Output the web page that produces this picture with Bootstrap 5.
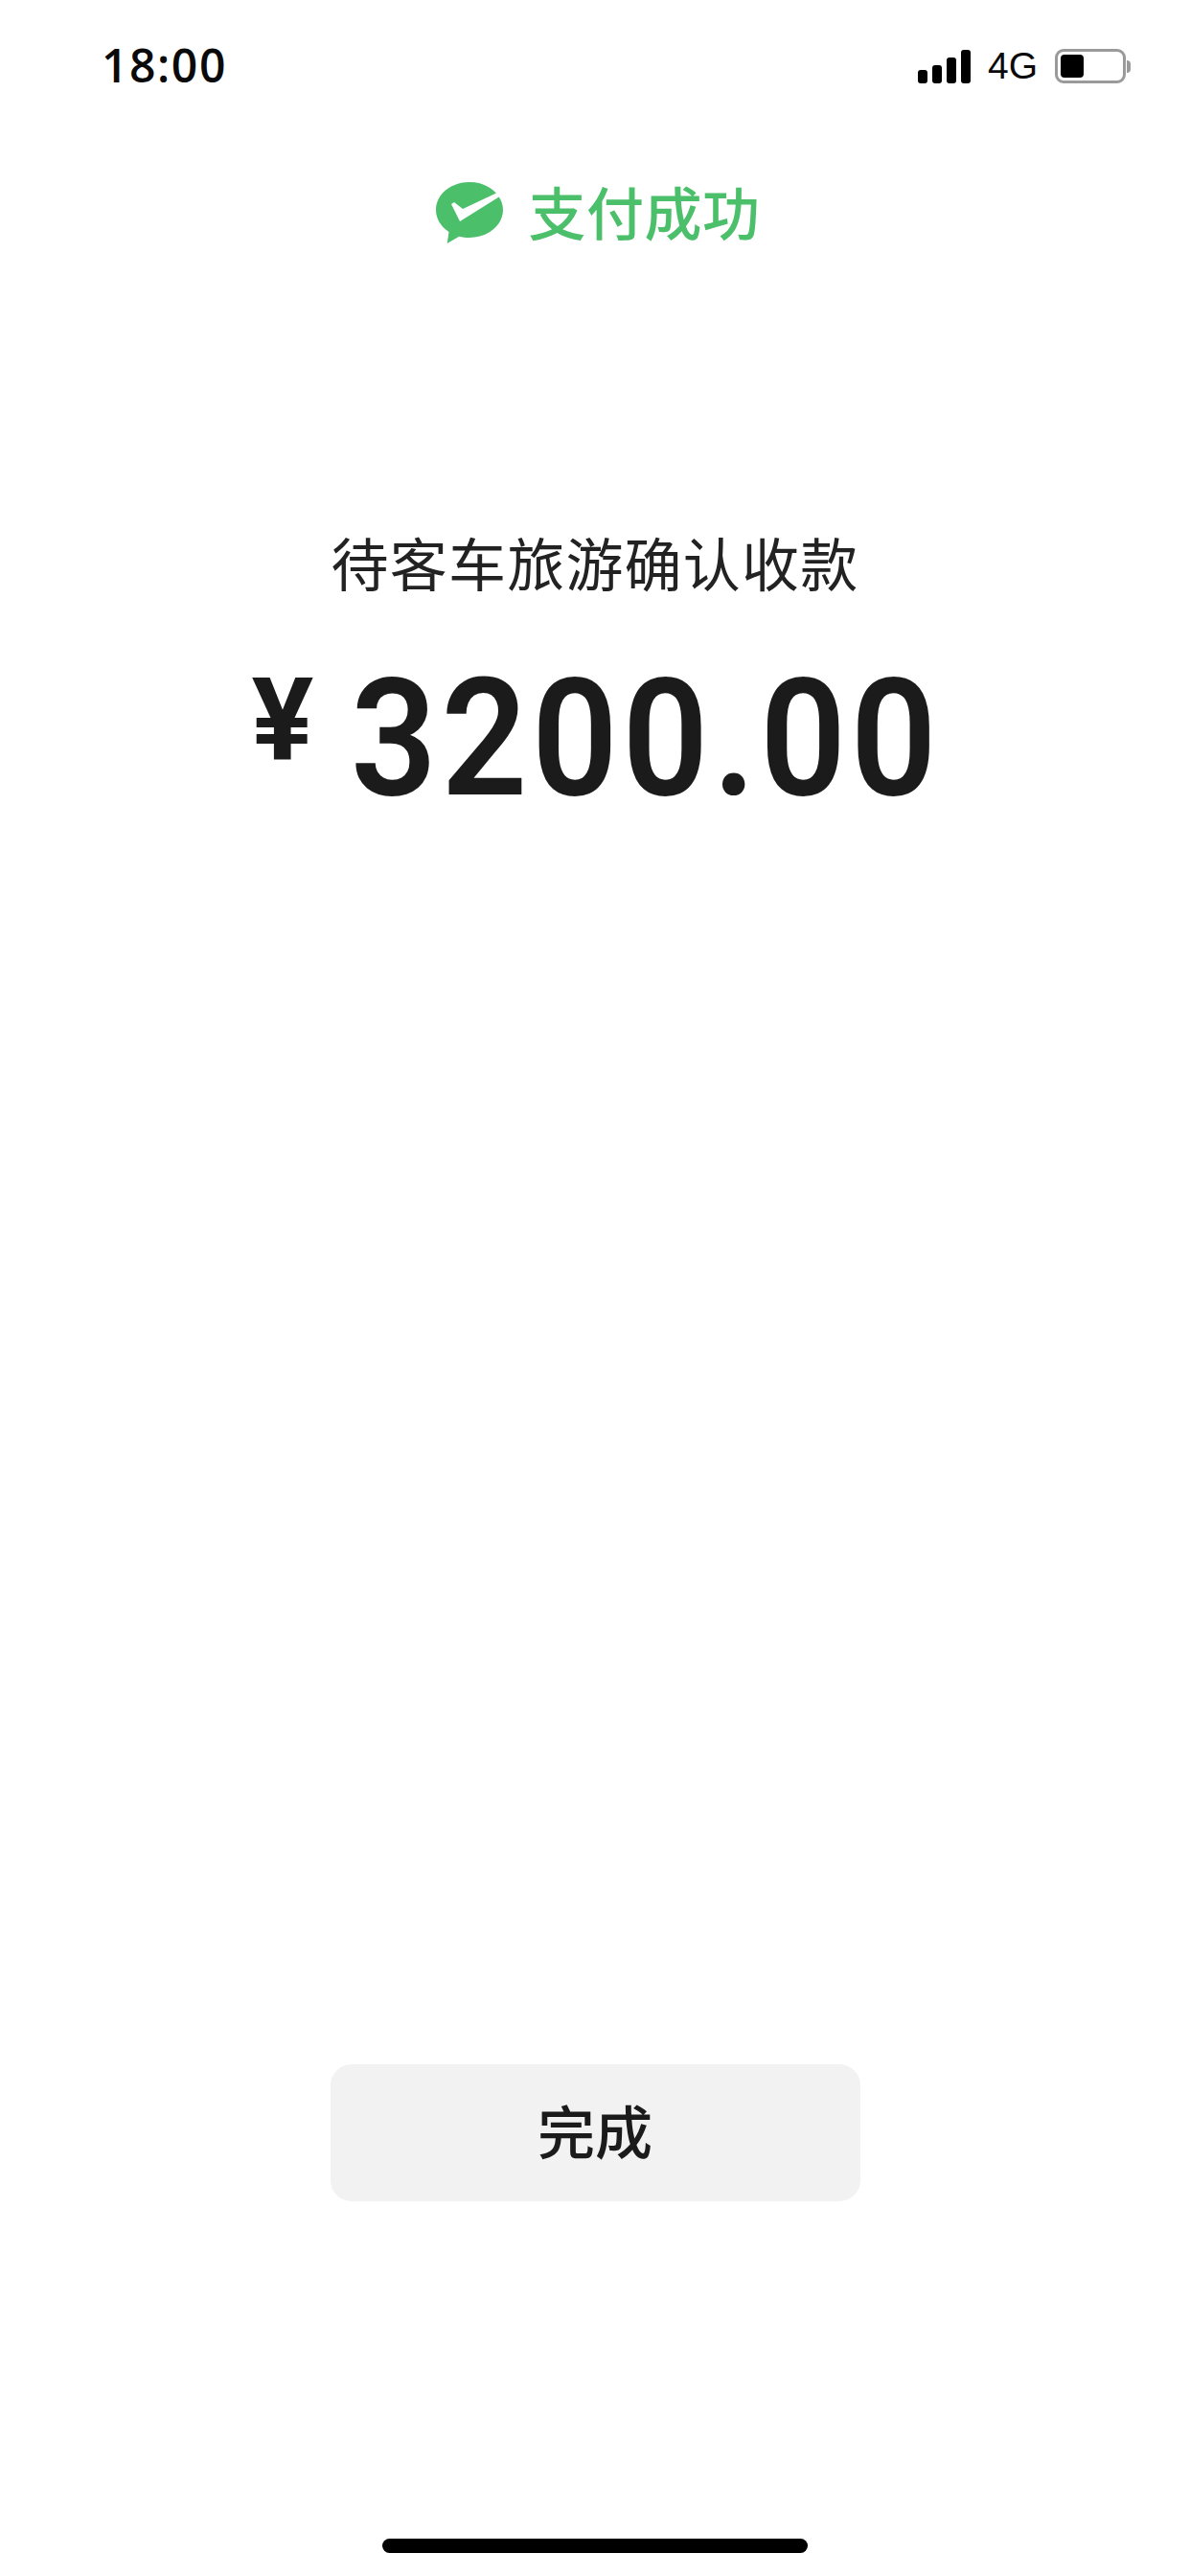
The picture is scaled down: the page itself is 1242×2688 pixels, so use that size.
<!DOCTYPE html>
<html lang="zh-CN">
<head>
  <meta charset="UTF-8">
  <meta name="viewport" content="width=device-width, initial-scale=1.0">
  <title>支付成功</title>
  <link href="https://cdn.jsdelivr.net/npm/bootstrap@5.3.3/dist/css/bootstrap.min.css" rel="stylesheet">
  <style>
    body {
      background: #fff;
      font-family: "Noto Sans CJK SC", "Noto Sans", sans-serif;
      color: #1b1b1b;
    }
    .phone-page { width: 1242px; height: 2688px; }

    /* status bar */
    .status-strip { height: 136px; padding: 41px 62px 0 106px; }
    .clock-text { font: 600 48px/54px "Open Sans", sans-serif; color: #0a0a0a; letter-spacing: 1.6px; }
    .signal-bars { gap: 5px; height: 35px; width: 55px; margin-right: 18px; }
    .signal-bars span { width: 10px; background: #000; border-radius: 3px; }
    .signal-bars .lvl-1 { height: 14px; }
    .signal-bars .lvl-2 { height: 19px; }
    .signal-bars .lvl-3 { height: 27px; }
    .signal-bars .lvl-4 { height: 35px; }
    .net-text { font: 400 39px/40px "Liberation Sans", sans-serif; color: #0a0a0a; width: 53px; margin-right: 17px; }
    .batt-shell { width: 74px; height: 36px; border: 3px solid #9a9a9a; border-radius: 9px; padding: 3px; }
    .batt-level { width: 24px; height: 100%; background: #000; border-radius: 4px; }
    .batt-nub { width: 4px; height: 13px; margin-left: 1px; background: #9a9a9a; border-radius: 0 4px 4px 0; }
    .status-right { margin-top: 8px; }

    /* result heading */
    .pay-head { gap: 27px; height: 70px; margin-top: 49px; margin-left: 6px; }
    .pay-logo { width: 70px; height: 66px; margin-top: 3px; }
    .pay-title { font-size: 60px; line-height: 70px; font-weight: 500; color: #4cbf6b; letter-spacing: 0.5px; }

    /* payee + amount */
    .payee-name { margin-top: 293px; font-size: 60px; line-height: 76px; font-weight: 400; letter-spacing: 1.2px; color: #222; }
    .amount-line { margin-top: 72px; height: 150px; }
    .amount-sign { font: 700 121px/150px "Roboto", sans-serif; width: 103px; margin-top: -38px; }
    .amount-num { font: 600 171px/150px "Roboto", sans-serif; width: 614px; white-space: nowrap; letter-spacing: 5px; transform: scaleX(.92); transform-origin: left center; }

    /* bottom */
    .done-btn {
      width: 553px; height: 143px; margin-bottom: 352px; padding-bottom: 14px;
      background: #f2f2f2; border: 0; border-radius: 22px;
      font-size: 60px; line-height: 70px; font-weight: 500; color: #1b1b1b;
    }
    .done-btn:hover, .done-btn:active { background: #f2f2f2 !important; color: #1b1b1b !important; }
    .home-bar { width: 444px; height: 15px; background: #000; border-radius: 8px; margin-bottom: 24px; }
  </style>
</head>
<body>

<div class="phone-page d-flex flex-column align-items-center">

  <!-- status bar -->
  <div class="status-strip w-100 d-flex justify-content-between align-items-start">
    <div class="clock-text">18:00</div>
    <div class="status-right d-flex align-items-center">
      <div class="signal-bars d-flex align-items-end">
        <span class="lvl-1"></span><span class="lvl-2"></span><span class="lvl-3"></span><span class="lvl-4"></span>
      </div>
      <div class="net-text">4G</div>
      <div class="batt-shell"><div class="batt-level"></div></div>
      <div class="batt-nub"></div>
    </div>
  </div>

  <!-- logo + title -->
  <div class="pay-head d-flex align-items-center justify-content-center">
    <svg class="pay-logo" viewBox="0 0 70 66">
      <path fill="#4cbf6b" d="M35 1C16 1 0 13.500 0 30c0 9.500 5.200 17.600 13.500 23l-1.800 12 12.500-7.300c3.400.8 7 1.300 10.800 1.300 19.300 0 35-13 35-29S54.300 1 35 1z"/>
      <path fill="#fff" d="M16 24l3-2 9 7L66 11l3 3.500L25 42z"/>
    </svg>
    <div class="pay-title">支付成功</div>
  </div>

  <!-- payee and amount -->
  <div class="payee-name">待客车旅游确认收款</div>
  <div class="amount-line d-flex align-items-center">
    <div class="amount-sign">¥</div>
    <div class="amount-num">3200.00</div>
  </div>

  <!-- done button -->
  <button type="button" class="btn done-btn mt-auto">完成</button>
  <div class="home-bar"></div>
</div>

<script src="https://cdn.jsdelivr.net/npm/bootstrap@5.3.3/dist/js/bootstrap.bundle.min.js"></script>
</body>
</html>
